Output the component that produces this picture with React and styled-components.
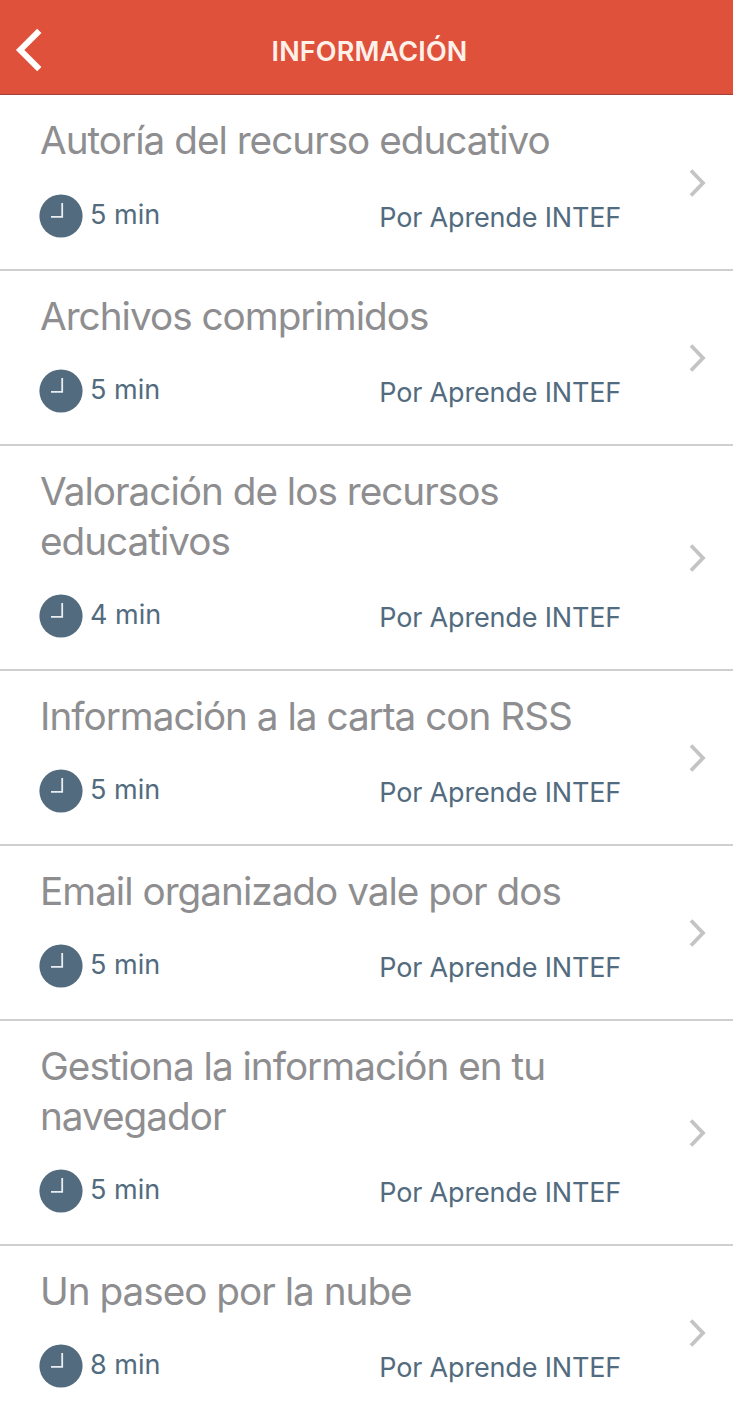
import React from 'react';
import styled, { createGlobalStyle } from 'styled-components';

const lessons = [
    { title: 'Autoría del recurso educativo', minutes: 5 },
    { title: 'Archivos comprimidos', minutes: 5 },
    { title: 'Valoración de los recursos educativos', minutes: 4 },
    { title: 'Información a la carta con RSS', minutes: 5 },
    { title: 'Email organizado vale por dos', minutes: 5 },
    { title: 'Gestiona la información en tu navegador', minutes: 5 },
    { title: 'Un paseo por la nube', minutes: 8 },
];

function App() {
  return (
    <>
    <GlobalStyle />
    <Screen>
        <Header>
            <BackButton aria-label="Volver">
                <svg width="28" height="44" viewBox="0 0 28 44" fill="none">
                    <path d="M24.3 2.8L5.2 22L24.3 41.2" stroke="#fff" strokeWidth="6" />
                </svg>
            </BackButton>
            <HeaderTitle>INFORMACIÓN</HeaderTitle>
        </Header>
        <List>
            {lessons.map((lesson) => (
                <Row key={lesson.title}>
                    <Content>
                        <Title>{lesson.title}</Title>
                        <Meta>
                            <Duration>
                                <Clock />
                                <Minutes>{lesson.minutes} min</Minutes>
                            </Duration>
                            <Author>Por Aprende INTEF</Author>
                        </Meta>
                    </Content>
                    <Chevron />
                </Row>
            ))}
        </List>
    </Screen>
    </>
  )
}

function Clock() {
  return (
    <ClockIcon viewBox="0 0 44 44" fill="none">
        <circle cx="22" cy="22" r="21.6" fill="#526b7e" />
        <path d="M23.2 9V22.8H12" stroke="#e8eef2" strokeWidth="1.8" />
    </ClockIcon>
  )
}

function Chevron() {
  return (
    <ChevronIcon viewBox="0 0 18 30" fill="none">
        <path d="M2 2.5L14 15L2 27.5" stroke="#c4c4c6" strokeWidth="3.8" />
    </ChevronIcon>
  )
}

const GlobalStyle = createGlobalStyle`
    body {
        margin: 0;
        background: #fff;
        font-family: Inter, "Liberation Sans", sans-serif;
    }
    * {
        box-sizing: border-box;
    }
`;
const Screen = styled.div`
    height: 1405px;
    overflow: hidden;
`;
const Header = styled.header`
    display: grid;
    grid-template-columns: 60px 1fr 60px;
    align-items: center;
    height: 95px;
    padding-top: 6px;
    background: #e0513b;
    border-bottom: 1px solid #a4403a;
`;
const BackButton = styled.button`
    display: flex;
    margin-top: -1px;
    padding: 0 0 0 15px;
    border: 0;
    background: none;
`;
const HeaderTitle = styled.h1`
    margin: 4px 0 0 6px;
    color: #fff1e9;
    font-size: 27px;
    font-weight: 600;
    line-height: 36px;
    letter-spacing: 0.15px;
    text-align: center;
`;
const List = styled.ul`
    margin: 0;
    padding: 0.3px 0 0;
    list-style: none;
`;
const Row = styled.li`
    display: flex;
    align-items: center;
    justify-content: space-between;
    padding: 21.2px 26px 31px 39px;
    border-bottom: 2px solid #cfcfd1;
`;
const Content = styled.div`
    width: 582px;
`;
const Title = styled.h2`
    max-width: 560px;
    margin: 0 0 27.5px 1px;
    color: #8e8e90;
    font-size: 38.7px;
    font-weight: 400;
    line-height: 49.6px;
    letter-spacing: -1px;
`;
const Meta = styled.div`
    display: flex;
    align-items: center;
    justify-content: space-between;
    height: 44px;
    color: #526b7e;
    font-size: 27px;
    line-height: 34px;
    letter-spacing: -0.17px;
`;
const Duration = styled.div`
    display: flex;
    align-items: center;
    gap: 7px;
`;
const ClockIcon = styled.svg`
    width: 44px;
    height: 44px;
`;
const Minutes = styled.span`
    margin-top: -2px;
    letter-spacing: 0;
`;
const Author = styled.span`
    margin-top: 4px;
`;
const ChevronIcon = styled.svg`
    flex: none;
    width: 18px;
    height: 30px;
    margin-top: 11px;
`;

export default App
